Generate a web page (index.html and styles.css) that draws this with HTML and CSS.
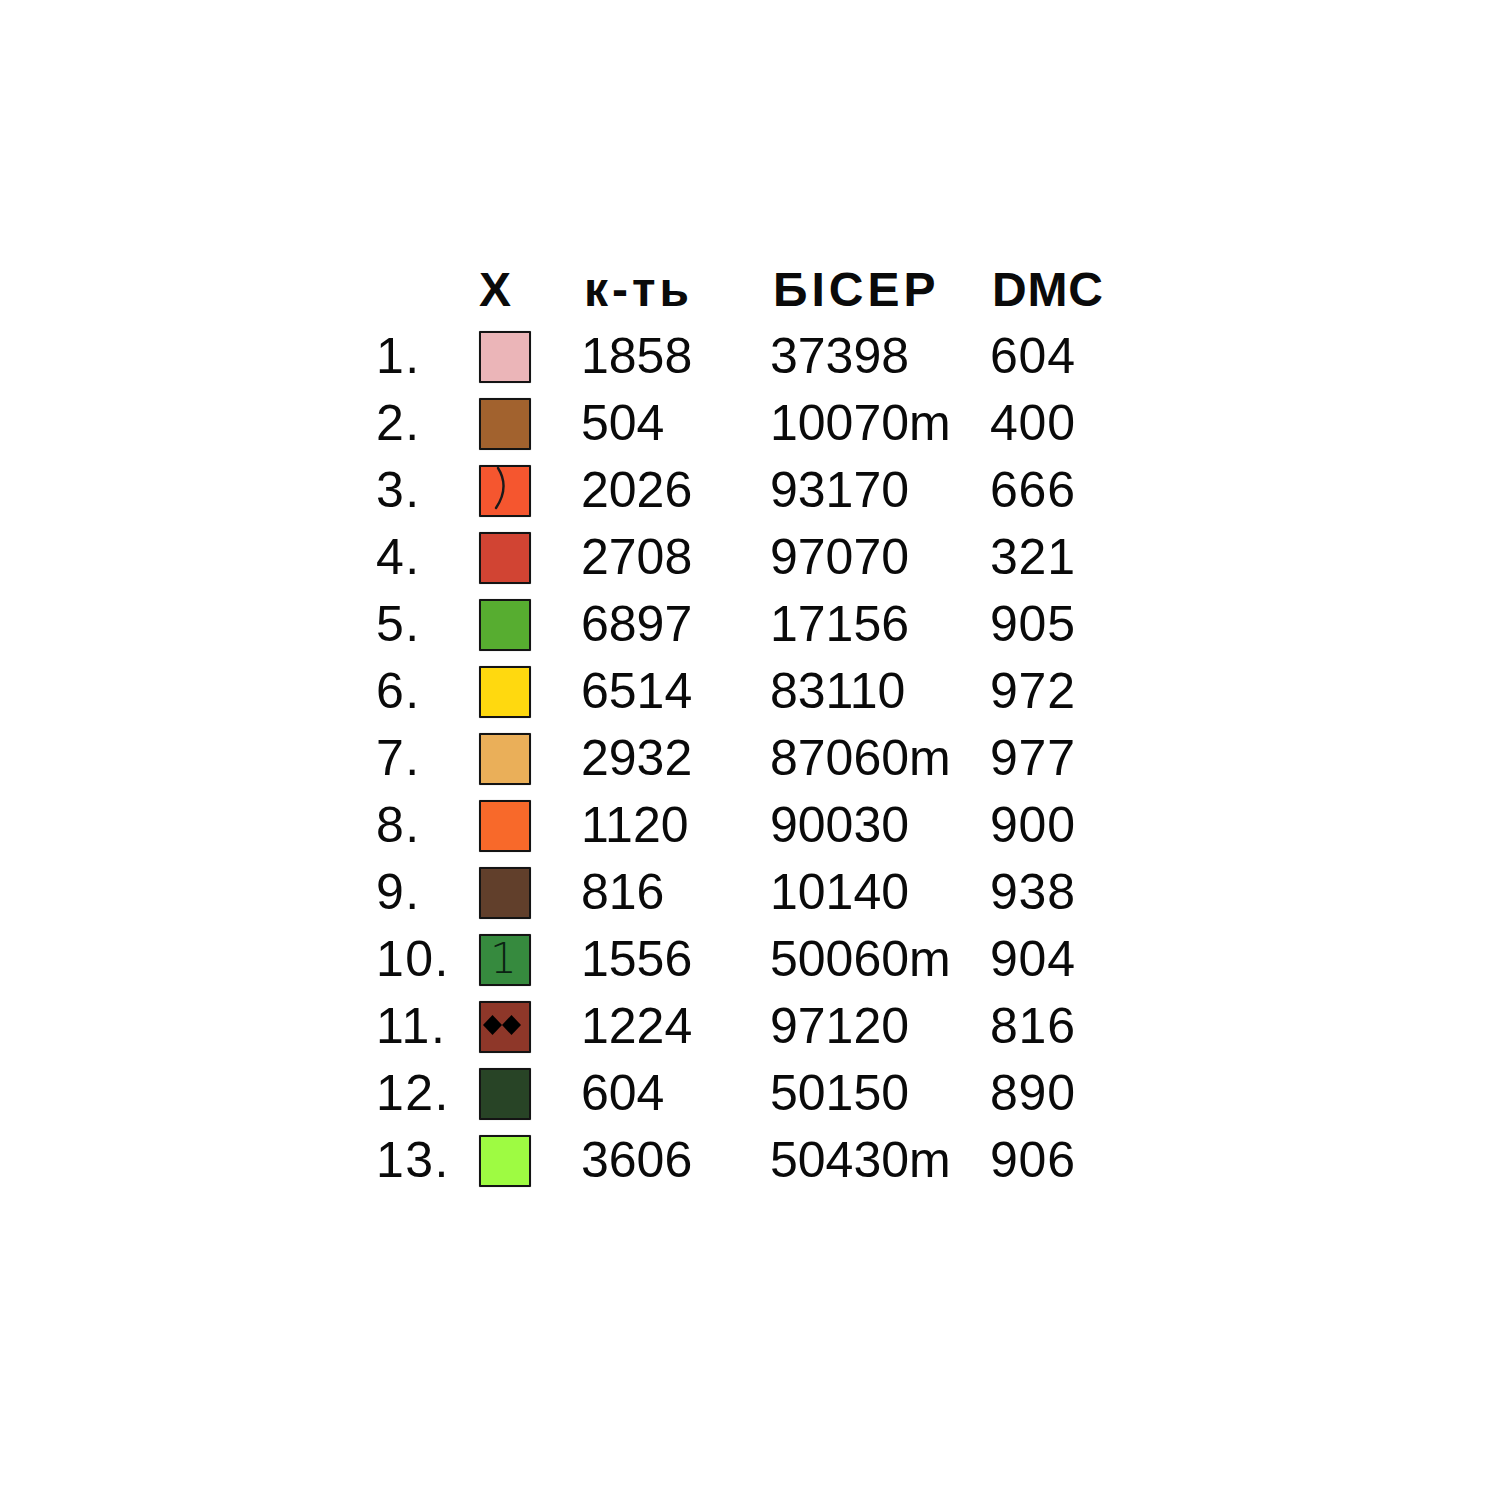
FILE: index.html
```html
<!DOCTYPE html>
<html lang="uk">
<head>
<meta charset="utf-8">
<title>Таблиця кольорів</title>
<link rel="stylesheet" href="styles.css">
</head>
<body>
<div class="legend">
  <div class="row head">
    <div class="num"></div>
    <div class="sym">X</div>
    <div class="cnt cyr">к-ть</div>
    <div class="bead cyr">БІСЕР</div>
    <div class="dmc">DMC</div>
  </div>
  <div class="row"><div class="num">1.</div><div class="sym"><span class="sw c1"></span></div><div class="cnt">1858</div><div class="bead">37398</div><div class="dmc">604</div></div>
  <div class="row"><div class="num">2.</div><div class="sym"><span class="sw c2"></span></div><div class="cnt">504</div><div class="bead">10070m</div><div class="dmc">400</div></div>
  <div class="row"><div class="num">3.</div><div class="sym"><span class="sw c3"><svg class="mark" viewBox="0 0 48 48" width="48" height="48"><path d="M17 1 Q29 20 15 41" fill="none" stroke="#1a1a1a" stroke-width="2.4" stroke-linecap="round"/></svg></span></div><div class="cnt">2026</div><div class="bead">93170</div><div class="dmc">666</div></div>
  <div class="row"><div class="num">4.</div><div class="sym"><span class="sw c4"></span></div><div class="cnt">2708</div><div class="bead">97070</div><div class="dmc">321</div></div>
  <div class="row"><div class="num">5.</div><div class="sym"><span class="sw c5"></span></div><div class="cnt">6897</div><div class="bead">17156</div><div class="dmc">905</div></div>
  <div class="row"><div class="num">6.</div><div class="sym"><span class="sw c6"></span></div><div class="cnt">6514</div><div class="bead">83110</div><div class="dmc">972</div></div>
  <div class="row"><div class="num">7.</div><div class="sym"><span class="sw c7"></span></div><div class="cnt">2932</div><div class="bead">87060m</div><div class="dmc">977</div></div>
  <div class="row"><div class="num">8.</div><div class="sym"><span class="sw c8"></span></div><div class="cnt">1120</div><div class="bead">90030</div><div class="dmc">900</div></div>
  <div class="row"><div class="num">9.</div><div class="sym"><span class="sw c9"></span></div><div class="cnt">816</div><div class="bead">10140</div><div class="dmc">938</div></div>
  <div class="row"><div class="num">10.</div><div class="sym"><span class="sw c10"><span class="glyph">1</span></span></div><div class="cnt">1556</div><div class="bead">50060m</div><div class="dmc">904</div></div>
  <div class="row"><div class="num">11.</div><div class="sym"><span class="sw c11"><svg class="mark" viewBox="0 0 48 48" width="48" height="48"><polygon points="11.5,12 21,22 11.5,32 2,22" fill="#000"/><polygon points="30.5,12 40,22 30.5,32 21,22" fill="#000"/></svg></span></div><div class="cnt">1224</div><div class="bead">97120</div><div class="dmc">816</div></div>
  <div class="row"><div class="num">12.</div><div class="sym"><span class="sw c12"></span></div><div class="cnt">604</div><div class="bead">50150</div><div class="dmc">890</div></div>
  <div class="row"><div class="num">13.</div><div class="sym"><span class="sw c13"></span></div><div class="cnt">3606</div><div class="bead">50430m</div><div class="dmc">906</div></div>
</div>
</body>
</html>
```

FILE: styles.css
```css
html, body {
  margin: 0;
  padding: 0;
  background: #ffffff;
}

body {
  font-family: "Liberation Sans", Arial, sans-serif;
  color: #0a0a0a;
}

.legend {
  display: flex;
  flex-direction: column;
  padding-top: 256px;
  padding-left: 376px;
}

.row {
  display: grid;
  grid-template-columns: 103px 102px 189px 220px 160px;
  height: 67px;
  align-items: center;
  font-size: 50px;
  line-height: 67px;
}

.row.head {
  font-weight: bold;
  font-size: 48px;
}

.head .cnt {
  padding-left: 3px;
}

.head .bead {
  padding-left: 3px;
}

.head .dmc {
  padding-left: 2px;
}

.head .cyr {
  letter-spacing: 4px;
}

.num {
  white-space: nowrap;
  letter-spacing: 1.5px;
}

.dmc {
  letter-spacing: 0.8px;
}

.sym {
  display: flex;
  align-items: center;
}

.sw {
  position: relative;
  display: block;
  width: 48px;
  height: 48px;
  border: 2px solid #141414;
  border-radius: 1px;
  box-shadow: 0 0 1px rgba(0, 0, 0, 0.45);
  overflow: hidden;
}

.mark {
  position: absolute;
  left: 0;
  top: 0;
  display: block;
}

.glyph {
  position: absolute;
  left: 9px;
  top: 0;
  font-family: "DejaVu Sans", "Liberation Sans", sans-serif;
  font-size: 42px;
  font-weight: 300;
  line-height: 46px;
  color: #0b2213;
}

.c1 { background: #ebb5b8; }
.c2 { background: #a2622e; }
.c3 { background: #f5562f; }
.c4 { background: #d14433; }
.c5 { background: #57ad30; }
.c6 { background: #ffd90f; }
.c7 { background: #eaaf59; }
.c8 { background: #f8692a; }
.c9 { background: #613f2b; }
.c10 { background: #368a3e; }
.c11 { background: #8e3729; }
.c12 { background: #284426; }
.c13 { background: #9efb42; }
```
